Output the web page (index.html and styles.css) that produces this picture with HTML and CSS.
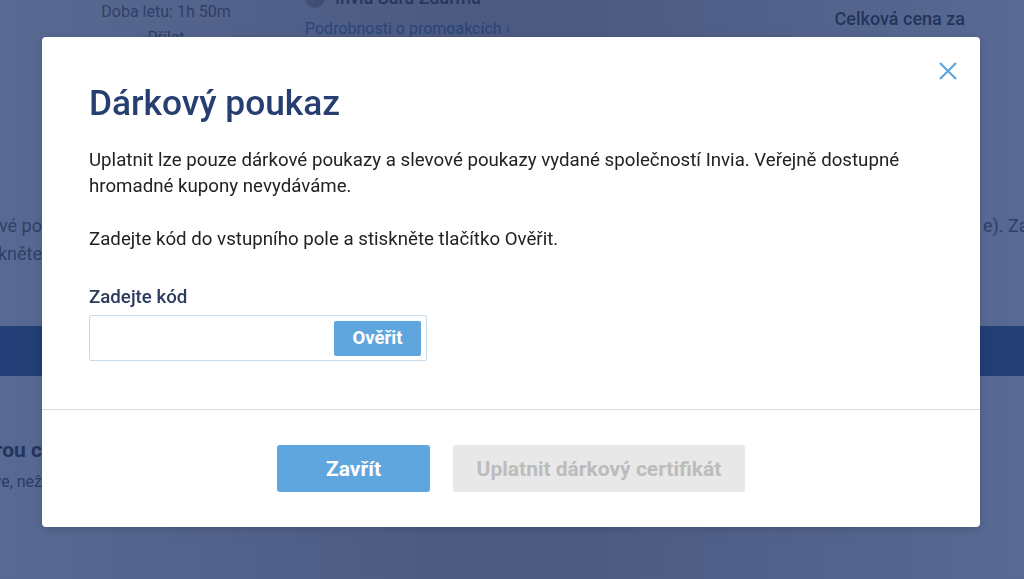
FILE: index.html
```html
<!DOCTYPE html>
<html lang="cs">
<head>
    <meta charset="UTF-8">
    <meta name="viewport" content="width=device-width, initial-scale=1.0">
    <title>Dárkový poukaz</title>
    <link rel="stylesheet" href="styles.css">
</head>
<body>
    <!-- Page behind the modal -->
    <div class="page">
        <div class="trip">
            <div class="trip-times">
                <span class="muted">Doba letu: 1h 50m</span>
                <span class="muted">Přílet</span>
            </div>
            <div class="trip-promo">
                <span class="promo-name"><span class="avatar"></span>Invia Sara Zdarma</span>
                <a class="promo-link">Podrobnosti o promoakcích &rsaquo;</a>
            </div>
            <div class="trip-price">Celková cena za</div>
        </div>
        <div class="page-text">
            <div class="line"><span class="tail">Uplatnit lze pouze dárkové po</span><span class="head">e). Zadejte kód</span></div>
            <div class="line"><span class="tail">Zadejte kód a stiskněte</span></div>
        </div>
        <div class="band"></div>
        <div class="section">
            <div class="line line-title"><span class="tail">Máte otázku ohledně objednávky, kterou c</span></div>
            <div class="line line-small"><span class="tail">Zavolejte nám ještě dříve, než</span></div>
        </div>
    </div>

    <!-- Gift voucher modal -->
    <div class="overlay">
        <div class="modal">
            <button class="close-btn" aria-label="Zavřít">
                <svg width="20" height="20" viewBox="0 0 20 20"><path d="M2 2 L18 18 M18 2 L2 18" stroke="#5ea4dc" stroke-width="2.2" fill="none"/></svg>
            </button>
            <div class="modal-body">
                <h1>Dárkový poukaz</h1>
                <p>Uplatnit lze pouze dárkové poukazy a slevové poukazy vydané společností Invia. Veřejně dostupné hromadné kupony nevydáváme.</p>
                <p>Zadejte kód do vstupního pole a stiskněte tlačítko Ověřit.</p>
                <label for="codeInput" class="code-label">Zadejte kód</label>
                <div class="code-field">
                    <input type="text" id="codeInput">
                    <button class="verify-btn">Ověřit</button>
                </div>
            </div>
            <div class="modal-footer">
                <button class="btn btn-primary">Zavřít</button>
                <button class="btn btn-disabled" disabled>Uplatnit dárkový certifikát</button>
            </div>
        </div>
    </div>
</body>
</html>
```

FILE: styles.css
```css
/* Page behind the dialog */
body {
    font-family: Roboto, "Liberation Sans", Arial, sans-serif;
    background-color: #ffffff;
    color: #333;
    margin: 0;
    padding: 0;
    height: 579px;
    overflow: hidden;
}

.page {
    height: 579px;
    overflow: hidden;
}

.trip {
    display: flex;
    padding: 2px 0 0 100px;
    height: 128px;
}

.trip-times {
    display: flex;
    flex-direction: column;
    align-items: center;
    width: 132px;
    gap: 7px;
}

.muted {
    font-size: 16px;
    line-height: 19px;
    color: #555;
}

.trip-promo {
    display: flex;
    flex-direction: column;
    margin: -15px 0 0 73px;
    gap: 10px;
}

.promo-name {
    display: flex;
    align-items: center;
    gap: 10px;
    font-size: 18px;
    line-height: 22px;
    font-weight: 500;
}

.avatar {
    width: 20px;
    height: 20px;
    border-radius: 50%;
    background-color: #b9a7a7;
}

.promo-link {
    font-size: 16px;
    line-height: 19px;
    color: #3d7bc4;
}

.trip-price {
    margin-left: auto;
    margin-right: 59px;
    margin-top: 6px;
    font-size: 18px;
    font-weight: 500;
    color: #222;
}

/* text lines that peek out on both sides of the dialog */
.line {
    display: flex;
    justify-content: space-between;
    height: 28px;
    line-height: 28px;
    white-space: nowrap;
}

.tail {
    display: flex;
    justify-content: flex-end;
    width: 42px;
    overflow: hidden;
}

.head {
    width: 41px;
    overflow: hidden;
}

.page-text {
    margin-top: 82px;
    font-size: 18px;
    color: #555;
}

.band {
    margin-top: 58px;
    height: 50px;
    background-color: #244d8a;
}

.section {
    padding-top: 60px;
}

.line-title {
    font-size: 21px;
    font-weight: 700;
    color: #222;
}

.line-small {
    margin-top: 4px;
    font-size: 16px;
    color: #444;
}

/* Modal */
.overlay {
    position: fixed;
    top: 0;
    left: 0;
    width: 100%;
    height: 100%;
    background: linear-gradient(90deg, rgba(35, 58, 112, 0.76), rgba(37, 54, 102, 0.82) 45%, rgba(37, 54, 102, 0.82) 55%, rgba(35, 58, 112, 0.76));
    display: flex;
    justify-content: flex-start;
    align-items: flex-start;
}

.modal {
    position: relative;
    margin: 37px 0 0 42px;
    width: 938px;
    background-color: #fff;
    border-radius: 4px;
    box-shadow: 0 2px 10px rgba(0, 0, 0, 0.15);
}

.close-btn {
    position: absolute;
    top: 24px;
    right: 22px;
    padding: 0;
    background: none;
    border: none;
    cursor: pointer;
    line-height: 0;
}

.modal-body {
    padding: 44px 47px 48px;
    color: #222;
}

.modal-body h1 {
    margin: 0;
    font-size: 35.3px;
    line-height: 44px;
    font-weight: 500;
    color: #263f70;
}

.modal-body p {
    margin: 22px 0 0 0;
    font-size: 18.7px;
    line-height: 26px;
}

.modal-body p + p {
    margin-top: 27px;
}

.code-label {
    display: block;
    margin-top: 33px;
    font-size: 18.7px;
    line-height: 24px;
    font-weight: 500;
    color: #2a3b5e;
}

.code-field {
    box-sizing: border-box;
    display: flex;
    align-items: center;
    margin-top: 6px;
    width: 338px;
    height: 46px;
    border: 1px solid #c8dbe9;
    border-radius: 2px;
    padding: 0 5px 0 0;
}

.code-field input {
    flex: 1;
    min-width: 0;
    height: 100%;
    border: none;
    outline: none;
    padding: 0 10px;
    font-family: inherit;
    font-size: 18px;
    background: transparent;
}

.verify-btn {
    width: 87px;
    height: 35px;
    background-color: #60a6de;
    color: #fff;
    border: none;
    border-radius: 2px;
    font-family: inherit;
    font-size: 18.5px;
    font-weight: 700;
    cursor: pointer;
}

.modal-footer {
    display: flex;
    justify-content: center;
    gap: 23px;
    padding: 35px 0;
    border-top: 1px solid #dcdcdc;
}

.btn {
    height: 47px;
    border: none;
    border-radius: 3px;
    font-family: inherit;
    font-size: 21px;
    font-weight: 700;
}

.btn-primary {
    width: 153px;
    background-color: #5fa5de;
    color: #fff;
    cursor: pointer;
}

.btn-disabled {
    width: 292px;
    background-color: #e8e8e8;
    color: #bcbcbc;
}
```
